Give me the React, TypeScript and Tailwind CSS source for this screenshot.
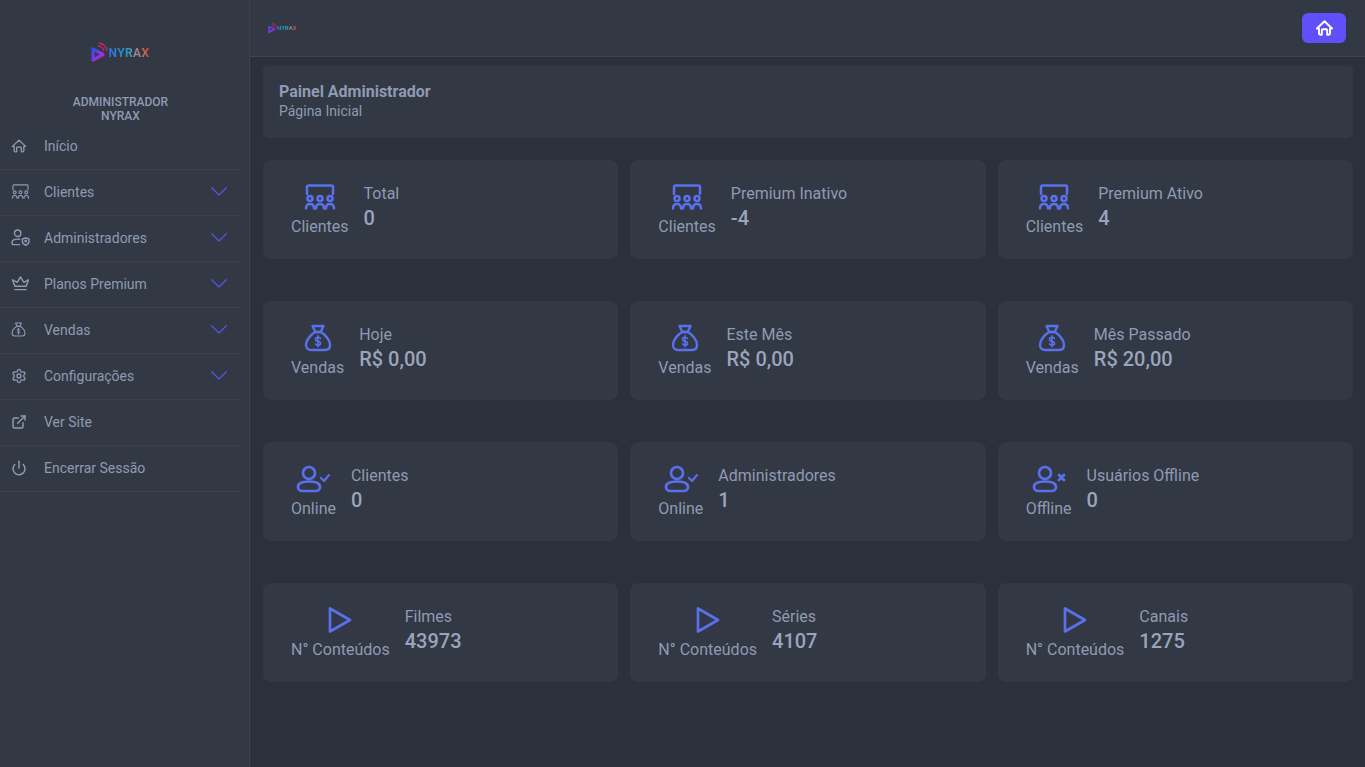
import { Settings, ExternalLink, Power } from "lucide-react";
import type { ReactNode } from "react";

type IconProps = { className?: string };

function HomeIcon({ className, sw = 1.600 }: IconProps & { sw?: number }) {
  return (
    <svg viewBox="0 0 20 18" fill="none" stroke="currentColor" strokeWidth={sw} strokeLinecap="round" strokeLinejoin="round" className={className}>
      <path d="M1.500 9.500L10 1.500l8.500 8h-2.300v5.500a1.500 1.500 0 0 1-1.500 1.500H13v-5a1 1 0 0 0-1-1H8a1 1 0 0 0-1 1v5H5.300a1.500 1.500 0 0 1-1.500-1.500V9.500z" />
    </svg>
  );
}

function GroupIcon({ className, sw = 2.500 }: IconProps & { sw?: number }) {
  return (
    <svg viewBox="0 0 32 26" fill="none" stroke="currentColor" strokeWidth={sw} strokeLinecap="round" strokeLinejoin="round" className={className}>
      <path d="M3 10V3A1.500 1.500 0 0 1 4.500 1.500h23A1.500 1.500 0 0 1 29 3v7" />
      <circle cx="6" cy="14.500" r="2.500" />
      <circle cx="16" cy="14.500" r="2.500" />
      <circle cx="26" cy="14.500" r="2.500" />
      <path d="M2 24.500c0-3 1.500-4.500 4-4.500s4 1.500 4 4.500" />
      <path d="M12 24.500c0-3 1.500-4.500 4-4.500s4 1.500 4 4.500" />
      <path d="M22 24.500c0-3 1.500-4.500 4-4.500s4 1.500 4 4.500" />
    </svg>
  );
}

function BagIcon({ className, sw = 2.400 }: IconProps & { sw?: number }) {
  return (
    <svg viewBox="0 0 28 28" fill="none" stroke="currentColor" strokeWidth={sw} strokeLinecap="round" strokeLinejoin="round" className={className}>
      <path d="M8.500 2h11l-2.800 6h-5.400z" />
      <path d="M11 8h6c4 2.500 9 8 9 13 0 3-2 5-5 5H7c-3 0-5-2-5-5 0-5 5-10.500 9-13z" />
      <path d="M16.500 14.500c-.5-1-1.500-1.300-2.500-1.300-1.500 0-2.500.8-2.500 2s1 1.800 2.500 2 2.500.8 2.500 2-1 2-2.500 2c-1 0-2-.4-2.500-1.300M14 11.800v11" strokeWidth="1.600" />
    </svg>
  );
}

function UserCheckIcon({ className }: IconProps) {
  return (
    <svg viewBox="0 0 34 28" fill="none" stroke="currentColor" strokeWidth="2.700" strokeLinecap="round" strokeLinejoin="round" className={className}>
      <circle cx="13" cy="8" r="6" />
      <path d="M6 26h14a4 4 0 0 0 4-4c0-3.500-4-5.500-11-5.500S2 18.500 2 22a4 4 0 0 0 4 4z" />
      <path d="M25 13l3 3 5-6" strokeWidth="2" />
    </svg>
  );
}

function UserXIcon({ className }: IconProps) {
  return (
    <svg viewBox="0 0 34 28" fill="none" stroke="currentColor" strokeWidth="2.700" strokeLinecap="round" strokeLinejoin="round" className={className}>
      <circle cx="13" cy="8" r="6" />
      <path d="M6 26h14a4 4 0 0 0 4-4c0-3.500-4-5.500-11-5.500S2 18.500 2 22a4 4 0 0 0 4 4z" />
      <path d="M27 10l5 5M32 10l-5 5" strokeWidth="2.800" />
    </svg>
  );
}

function PlayIcon({ className }: IconProps) {
  return (
    <svg viewBox="0 0 24 28" fill="none" stroke="currentColor" strokeWidth="2.700" strokeLinejoin="round" className={className}>
      <path d="M2 2.500v23l20-11.500z" />
    </svg>
  );
}

function AdminIcon({ className }: IconProps) {
  return (
    <svg viewBox="0 0 20 18" fill="none" stroke="currentColor" strokeWidth="1.500" strokeLinecap="round" strokeLinejoin="round" className={className}>
      <circle cx="7" cy="4.500" r="3.400" />
      <path d="M9 16.500H3a2 2 0 0 1-2-2c0-2.300 2.500-3.800 6-3.800 .8 0 1.500.1 2 .2" />
      <path d="M15.500 9.500l3.500 1.100v2.400c0 1.900-1.300 3.300-3.500 4.200-2.200-.9-3.500-2.300-3.500-4.200v-2.400z" />
      <circle cx="15.500" cy="12.800" r=".8" fill="currentColor" />
    </svg>
  );
}

function CrownIcon({ className }: IconProps) {
  return (
    <svg viewBox="0 0 20 16" fill="none" stroke="currentColor" strokeWidth="1.500" strokeLinecap="round" strokeLinejoin="round" className={className}>
      <path d="M4 11L1.500 4l5 2.800L10 1l3.500 5.800 5-2.800L16 11z" />
      <path d="M4 14.500h12" />
    </svg>
  );
}

function Arrow() {
  return (
    <svg viewBox="0 0 16 9" fill="none" stroke="currentColor" strokeWidth="1.300" strokeLinecap="round" strokeLinejoin="round" className="w-[16px] h-[9px] text-[#5d50e0]">
      <path d="M.7.7L8 8l7.300-7.300" />
    </svg>
  );
}

function Logo({ small }: { small?: boolean }) {
  const id = small ? "lgs" : "lgb";
  return (
    <div className="flex items-center">
      <svg viewBox="0 0 17 22" className={small ? "w-[9px] h-[12px] -mt-[1px]" : "w-[17px] h-[22px] -mt-[2px]"} fill="none">
        <defs>
          <linearGradient id={id} x1="0" y1="0" x2="1" y2="1">
            <stop offset="0" stopColor="#2f4cf0" />
            <stop offset="1" stopColor="#d61fd0" />
          </linearGradient>
        </defs>
        <path d="M2 8v11l10-5.500z" stroke={`url(#${id})`} strokeWidth="3.200" strokeLinejoin="round" />
        <path d="M7 5a6 6 0 0 1 6 5M8 2a9 9 0 0 1 8 8" stroke="#d8256a" strokeWidth="1.300" />
      </svg>
      <span
        className={
          small
            ? "bg-gradient-to-r from-[#2f7fd8] via-[#2f9fc0] to-[#d8321e] bg-clip-text text-[6px] leading-none font-bold text-transparent"
            : "bg-gradient-to-r from-[#2f6fe0] via-[#2a9ab8] to-[#e8351c] bg-clip-text text-[12px] leading-none font-bold tracking-[0.4px] text-transparent"
        }
      >
        NYRAX
      </span>
    </div>
  );
}

const nav: { label: string; icon: ReactNode; arrow?: boolean }[] = [
  { label: "Início", icon: <HomeIcon className="w-[16px] h-[14px]" sw={1.700} /> },
  { label: "Clientes", icon: <GroupIcon className="w-[19px] h-[15px]" sw={2} />, arrow: true },
  { label: "Administradores", icon: <AdminIcon className="w-[19px] h-[17px]" />, arrow: true },
  { label: "Planos Premium", icon: <CrownIcon className="w-[19px] h-[15px]" />, arrow: true },
  { label: "Vendas", icon: <BagIcon className="w-[15px] h-[15px]" sw={2} />, arrow: true },
  { label: "Configurações", icon: <Settings className="w-[16px] h-[16px]" strokeWidth={2} />, arrow: true },
  { label: "Ver Site", icon: <ExternalLink className="w-[16px] h-[16px]" strokeWidth={2.200} /> },
  { label: "Encerrar Sessão", icon: <Power className="w-[16px] h-[16px]" strokeWidth={2.200} /> },
];

function Sidebar() {
  return (
    <aside className="w-[250px] shrink-0 min-h-screen bg-[#323844] border-r border-[#3b414d] flex flex-col">
      <div className="w-[241px] h-[84px] flex items-end justify-center pb-[21px]">
        <Logo />
      </div>
      <div className="w-[241px] h-[40px] pt-[11px] text-center text-xs leading-[14px] font-medium text-[#8f9bb3]">
        <div>ADMINISTRADOR</div>
        <div>NYRAX</div>
      </div>
      <nav className="mr-[8px]">
        {nav.map((item) => (
          <div key={item.label} className="h-[46px] pb-[2px] flex items-center pl-[11px] pr-[14px] border-b border-[#3b414d] text-sm text-[#8f9bb3]">
            <span className="w-[33px] flex items-center">{item.icon}</span>
            <span className="flex-1">{item.label}</span>
            {item.arrow && <Arrow />}
          </div>
        ))}
      </nav>
    </aside>
  );
}

function StatCard({ icon, label, title, value }: { icon: ReactNode; label: string; title: string; value: string }) {
  return (
    <div className="h-[99px] rounded-lg bg-[#323844] pl-[28px] pt-[22px] flex">
      <div className="flex flex-col items-center">
        <div className="h-[30px] flex items-center justify-center text-[#5a71ee]">{icon}</div>
        <div className="mt-[3px] text-base leading-[24px] text-[#8f9bb3]">{label}</div>
      </div>
      <div className="ml-[15px] pt-[1px]">
        <div className="text-base leading-[22px] text-[#8f9bb3]">{title}</div>
        <div className="mt-[1px] text-xl leading-[25px] font-medium text-[#9aa5bc]">{value}</div>
      </div>
    </div>
  );
}

const group = <GroupIcon className="w-[32px] h-[26px]" />;
const bag = <BagIcon className="w-[28px] h-[28px]" />;
const check = <UserCheckIcon className="w-[34px] h-[28px]" />;
const cross = <UserXIcon className="w-[34px] h-[28px]" />;
const play = <PlayIcon className="w-[24px] h-[28px]" />;

const cards = [
  { icon: group, label: "Clientes", title: "Total", value: "0" },
  { icon: group, label: "Clientes", title: "Premium Inativo", value: "-4" },
  { icon: group, label: "Clientes", title: "Premium Ativo", value: "4" },
  { icon: bag, label: "Vendas", title: "Hoje", value: "R$ 0,00" },
  { icon: bag, label: "Vendas", title: "Este Mês", value: "R$ 0,00" },
  { icon: bag, label: "Vendas", title: "Mês Passado", value: "R$ 20,00" },
  { icon: check, label: "Online", title: "Clientes", value: "0" },
  { icon: check, label: "Online", title: "Administradores", value: "1" },
  { icon: cross, label: "Offline", title: "Usuários Offline", value: "0" },
  { icon: play, label: "N° Conteúdos", title: "Filmes", value: "43973" },
  { icon: play, label: "N° Conteúdos", title: "Séries", value: "4107" },
  { icon: play, label: "N° Conteúdos", title: "Canais", value: "1275" },
];

export default function App() {
  return (
    <div className="min-h-screen flex bg-[#2a303c] font-['Roboto',sans-serif] overflow-hidden">
      <Sidebar />
      <main className="flex-1 min-w-0">
        <header className="h-[57px] bg-[#323844] border-b border-[#3f4651] flex items-center justify-between pl-[18px] pr-[19px]">
          <Logo small />
          <button className="w-[44px] h-[30px] mb-[1px] rounded-md bg-[#6050fa] flex items-center justify-center text-white">
            <HomeIcon className="w-[19px] h-[16px]" sw={2.200} />
          </button>
        </header>
        <div className="pl-[13px] pr-3 pt-[9px]">
          <div className="h-[72px] rounded-b-md rounded-t-sm bg-[#323844] pl-4 pt-4">
            <div className="text-base leading-[20px] font-bold text-[#8f9bb3]">Painel Administrador</div>
            <div className="text-sm leading-[19px] text-[#8f9bb3]">Página Inicial</div>
          </div>
          <div className="mt-[22px] grid grid-cols-3 gap-x-3 gap-y-[42px]">
            {cards.map((c) => (
              <StatCard key={c.label + c.title} icon={c.icon} label={c.label} title={c.title} value={c.value} />
            ))}
          </div>
        </div>
      </main>
    </div>
  );
}
